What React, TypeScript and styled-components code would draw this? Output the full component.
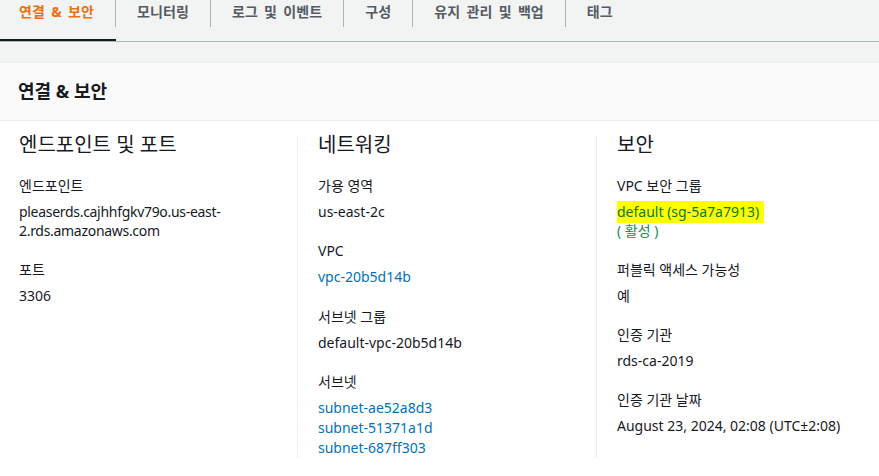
import React from "react";
import styled, { createGlobalStyle } from "styled-components";

const GlobalStyle = createGlobalStyle`
  html, body { margin: 0; padding: 0; }
  body {
    background: #f2f3f3;
    font-family: "Noto Sans", "Noto Sans CJK KR", sans-serif;
    color: #16191f;
    font-size: 14px;
  }
`;

const Page = styled.div`
  display: flex;
  flex-direction: column;
  gap: 20px;
  width: 879px;
  overflow: hidden;
`;

const TabBar = styled.nav`
  display: flex;
  height: 41px;
  border-bottom: 1px solid #aab7b8;
`;

const Tab = styled.div<{ $active?: boolean }>`
  display: flex;
  align-items: flex-start;
  height: 100%;
  box-sizing: border-box;
  border-bottom: 2px solid ${(p) => (p.$active ? "#16191f" : "transparent")};
  cursor: pointer;
`;

const TabLabel = styled.span<{ $active?: boolean; $last?: boolean }>`
  display: block;
  height: 27px;
  line-height: 24px;
  padding: 0 21px 0 ${(p) => (p.$active ? "19px" : "21px")};
  border-right: 1px solid ${(p) => (p.$last ? "transparent" : "#aab7b8")};
  font-weight: 700;
  font-size: 14px;
  letter-spacing: 0.1px;
  word-spacing: 2.5px;
  color: ${(p) => (p.$active ? "#ec7211" : "#545b64")};
  white-space: nowrap;
`;

const Card = styled.section`
  background: #ffffff;
  border-top: 1px solid #eaeded;
`;

const CardHeader = styled.header`
  background: #fafafa;
  border-bottom: 1px solid #eaeded;
  height: 58px;
  box-sizing: border-box;
  display: flex;
  align-items: center;
  padding: 0 18px 4px;
`;

const CardTitle = styled.h2`
  margin: 0;
  font-size: 18px;
  font-weight: 700;
  color: #16191f;
`;

const CardBody = styled.div`
  display: grid;
  grid-template-columns: 297px 299px 1fr;
  padding: 15px 0 30px;
`;

const Column = styled.div<{ $first?: boolean }>`
  display: flex;
  flex-direction: column;
  padding: 0 20px 0 ${(p) => (p.$first ? "18px" : "20px")};
  border-left: 1px solid ${(p) => (p.$first ? "transparent" : "#eaeded")};
  min-width: 0;
`;

const ColumnTitle = styled.h3`
  margin: 0 0 22px;
  font-size: 20px;
  line-height: 18px;
  font-weight: 400;
  color: #16191f;
`;

const Item = styled.div`
  display: flex;
  flex-direction: column;
  margin-bottom: 20px;
  &:last-child { margin-bottom: 0; }
`;

const Label = styled.div`
  line-height: 20px;
  margin-bottom: 6px;
  color: #16191f;
`;

const Value = styled.div<{ $tight?: boolean }>`
  line-height: 19px;
  color: #16191f;
  letter-spacing: ${(p) => (p.$tight ? "-0.3px" : "normal")};
`;

const Link = styled.a`
  display: block;
  color: #0073bb;
  text-decoration: none;
  line-height: 20px;
`;

const Highlight = styled.span`
  background: #ffff00;
  color: #0a7a24;
  padding: 1px 5px 2px 0;
`;

const Status = styled.div`
  color: #1d8a4a;
  line-height: 19px;
`;

const tabs = ["연결 & 보안", "모니터링", "로그 및 이벤트", "구성", "유지 관리 및 백업", "태그"];

export default function App() {
  return (
    <>
      <GlobalStyle />
      <Page>
        <TabBar>
          {tabs.map((t, i) => (
            <Tab key={t} $active={i === 0}>
              <TabLabel $active={i === 0} $last={i === tabs.length - 1}>
                {t}
              </TabLabel>
            </Tab>
          ))}
        </TabBar>
        <Card>
          <CardHeader>
            <CardTitle>연결 &amp; 보안</CardTitle>
          </CardHeader>
          <CardBody>
            <Column $first>
              <ColumnTitle>엔드포인트 및 포트</ColumnTitle>
              <Item>
                <Label>엔드포인트</Label>
                <Value $tight>pleaserds.cajhhfgkv79o.us-east-2.rds.amazonaws.com</Value>
              </Item>
              <Item>
                <Label>포트</Label>
                <Value>3306</Value>
              </Item>
            </Column>
            <Column>
              <ColumnTitle>네트워킹</ColumnTitle>
              <Item>
                <Label>가용 영역</Label>
                <Value>us-east-2c</Value>
              </Item>
              <Item>
                <Label>VPC</Label>
                <Link href="#">vpc-20b5d14b</Link>
              </Item>
              <Item>
                <Label>서브넷 그룹</Label>
                <Value>default-vpc-20b5d14b</Value>
              </Item>
              <Item>
                <Label>서브넷</Label>
                <Link href="#">subnet-ae52a8d3</Link>
                <Link href="#">subnet-51371a1d</Link>
                <Link href="#">subnet-687ff303</Link>
              </Item>
            </Column>
            <Column>
              <ColumnTitle>보안</ColumnTitle>
              <Item>
                <Label>VPC 보안 그룹</Label>
                <Value>
                  <Highlight>default (sg-5a7a7913)</Highlight>
                </Value>
                <Status>( 활성 )</Status>
              </Item>
              <Item>
                <Label>퍼블릭 액세스 가능성</Label>
                <Value>예</Value>
              </Item>
              <Item>
                <Label>인증 기관</Label>
                <Value>rds-ca-2019</Value>
              </Item>
              <Item>
                <Label>인증 기관 날짜</Label>
                <Value>August 23, 2024, 02:08 (UTC±2:08)</Value>
              </Item>
            </Column>
          </CardBody>
        </Card>
      </Page>
    </>
  );
}
